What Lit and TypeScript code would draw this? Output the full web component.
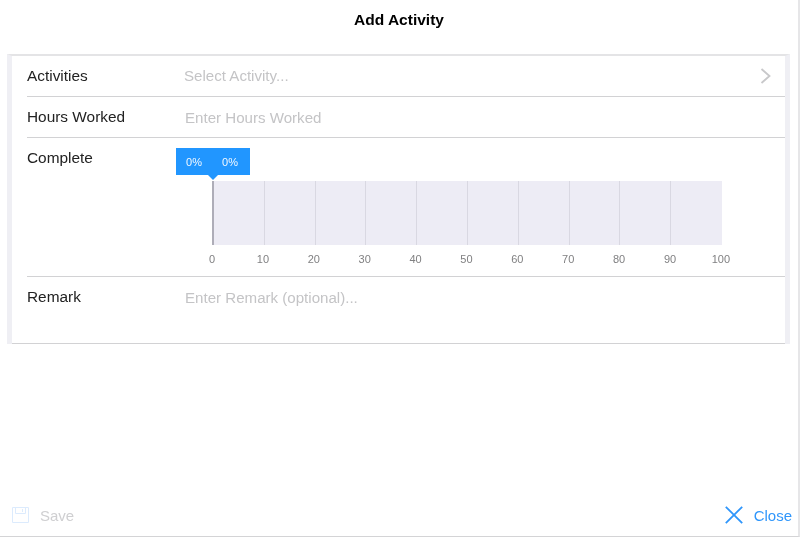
import { LitElement, html, css } from "lit";
import { customElement } from "lit/decorators.js";

const TICKS = [0, 10, 20, 30, 40, 50, 60, 70, 80, 90, 100];

@customElement("app-root")
export class AppRoot extends LitElement {
  static styles = css`
    :host {
      display: flex;
      flex-direction: column;
      box-sizing: border-box;
      width: 800px;
      height: 537px;
      border-right: 2px solid #e6e6e8;
      border-bottom: 1px solid #d4d4d6;
      font-family: "Liberation Sans", Arial, sans-serif;
      color: #222;
      overflow: hidden;
      will-change: transform;
    }
    .title {
      height: 54px;
      box-sizing: border-box;
      padding-top: 11px;
      text-align: center;
      font-size: 15.5px;
      line-height: 17px;
      font-weight: 700;
      color: #000;
    }
    .panel {
      margin-left: 7px;
      width: 783px;
      box-sizing: border-box;
      border-left: 5px solid #efeff4;
      border-right: 5px solid #efeff4;
      border-top: 2px solid #e4e4e6;
    }
    .rows {
      padding-left: 15px;
      border-bottom: 1px solid #d2d2d4;
    }
    .row {
      display: flex;
      border-bottom: 1px solid #d2d2d4;
      box-sizing: border-box;
    }
    .row:last-child {
      border-bottom: none;
    }
    .label {
      width: 157px;
      flex: none;
      font-size: 15.4px;
      line-height: 18px;
      color: #222;
    }
    .ph {
      flex: 1;
      font-size: 15.1px;
      line-height: 18px;
      color: #c4c4c6;
    }
    .activities {
      height: 41px;
      padding-top: 11px;
      padding-right: 13px;
    }
    .activities .chev {
      width: 12px;
      height: 16px;
      margin-top: 1px;
    }
    .hours {
      height: 41px;
      padding-top: 11px;
    }
    .hours .ph,
    .remark .ph {
      padding-left: 1px;
      padding-top: 1px;
    }
    .complete {
      height: 139px;
      padding-top: 11px;
    }
    .remark {
      height: 66px;
      padding-top: 11px;
    }
    .slider {
      flex: 1;
      position: relative;
      padding: 32px 0 0 28px;
    }
    .tooltip {
      position: absolute;
      left: -8px;
      top: -1px;
      width: 74px;
      height: 27px;
      display: flex;
      align-items: center;
      background: #2196ff;
      color: #f2f8ff;
      font-size: 11px;
    }
    .tooltip span {
      width: 36px;
      text-align: center;
    }
    .tooltip::after {
      content: "";
      position: absolute;
      left: 32px;
      top: 27px;
      border-left: 5px solid transparent;
      border-right: 5px solid transparent;
      border-top: 5px solid #2196ff;
    }
    .band {
      width: 510px;
      height: 64px;
      display: flex;
      background: #edecf5;
    }
    .cell {
      width: 50.8px;
      flex: none;
      box-sizing: border-box;
      border-left: 1px solid #d9d8e2;
    }
    .cell:first-child {
      width: 51.8px;
      border-left: 2px solid #aeadb8;
    }
    .axis {
      width: 509px;
      margin-top: 8px;
      display: flex;
      justify-content: space-between;
      font-size: 11px;
      line-height: 13px;
      color: #808082;
    }
    .axis span {
      width: 0;
      display: flex;
      justify-content: center;
      white-space: nowrap;
    }
    .footer {
      margin-top: auto;
      height: 43px;
      display: flex;
      align-items: center;
      justify-content: space-between;
      padding: 0 6px 0 11px;
      font-size: 15px;
    }
    .action {
      display: flex;
      align-items: center;
    }
    .action span {
      padding-top: 2px;
    }
    .save {
      color: #cfcfd1;
      gap: 11px;
    }
    .close {
      color: #2f96fb;
      gap: 10px;
    }
    .close svg {
      margin-right: 1px;
    }
  `;

  render() {
    return html`
      <div class="title">Add Activity</div>
      <div class="panel">
        <div class="rows">
          <div class="row activities">
            <div class="label">Activities</div>
            <div class="ph">Select Activity...</div>
            <svg class="chev" viewBox="0 0 12 16" fill="none" stroke="#c8c8ca" stroke-width="1.8">
              <path d="M1.5 1 L9.5 8 L1.5 15" />
            </svg>
          </div>
          <div class="row hours">
            <div class="label">Hours Worked</div>
            <div class="ph">Enter Hours Worked</div>
          </div>
          <div class="row complete">
            <div class="label">Complete</div>
            <div class="slider">
              <div class="tooltip"><span>0%</span><span>0%</span></div>
              <div class="band">
                ${TICKS.slice(1).map(() => html`<div class="cell"></div>`)}
              </div>
              <div class="axis">
                ${TICKS.map((t) => html`<span>${t}</span>`)}
              </div>
            </div>
          </div>
          <div class="row remark">
            <div class="label">Remark</div>
            <div class="ph">Enter Remark (optional)...</div>
          </div>
        </div>
      </div>
      <div class="footer">
        <div class="action save">
          <svg width="18" height="18" viewBox="0 0 18 18" fill="none" stroke="#dcebfd" stroke-width="1">
            <path d="M1.5 1.5 H17.5 V16.5 H1.5 Z" />
            <path d="M4.5 1.5 V7.5 H14.5 V1.5" />
            <path d="M11.5 3 V6" />
          </svg>
          <span>Save</span>
        </div>
        <div class="action close">
          <svg width="18" height="18" viewBox="0 0 18 18" fill="none" stroke="#2f96fb" stroke-width="1.8">
            <path d="M0.8 0.8 L17.2 17.2 M17.2 0.8 L0.8 17.2" />
          </svg>
          <span>Close</span>
        </div>
      </div>
    `;
  }
}
